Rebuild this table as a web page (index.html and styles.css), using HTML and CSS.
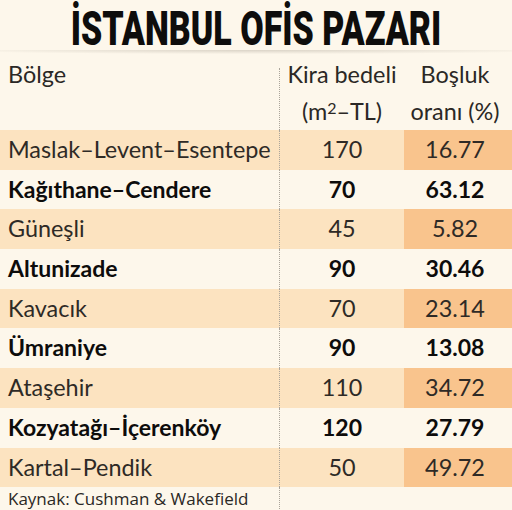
FILE: index.html
```html
<!DOCTYPE html>
<html lang="tr">
<head>
<meta charset="utf-8">
<link rel="stylesheet" href="styles.css">
</head>
<body>
<div class="page">
  <header class="title-wrap">
    <h1 class="title">İSTANBUL OFİS PAZARI</h1>
    <div class="title-shadow"></div>
  </header>
  <div class="table">
    <div class="cell c1 head">Bölge</div>
    <div class="cell c2 head">Kira bedeli<br>(m<sup>2</sup>–TL)</div>
    <div class="cell c3 head">Boşluk<br>oranı (%)</div>

    <div class="cell c1 band">Maslak–Levent–Esentepe</div>
    <div class="cell c2 band">170</div>
    <div class="cell c3 band dark">16.77</div>

    <div class="cell c1 bold">Kağıthane–Cendere</div>
    <div class="cell c2 bold">70</div>
    <div class="cell c3 bold">63.12</div>

    <div class="cell c1 band">Güneşli</div>
    <div class="cell c2 band">45</div>
    <div class="cell c3 band dark">5.82</div>

    <div class="cell c1 bold">Altunizade</div>
    <div class="cell c2 bold">90</div>
    <div class="cell c3 bold">30.46</div>

    <div class="cell c1 band">Kavacık</div>
    <div class="cell c2 band">70</div>
    <div class="cell c3 band dark">23.14</div>

    <div class="cell c1 bold">Ümraniye</div>
    <div class="cell c2 bold">90</div>
    <div class="cell c3 bold">13.08</div>

    <div class="cell c1 band">Ataşehir</div>
    <div class="cell c2 band">110</div>
    <div class="cell c3 band dark">34.72</div>

    <div class="cell c1 bold">Kozyatağı–İçerenköy</div>
    <div class="cell c2 bold">120</div>
    <div class="cell c3 bold">27.79</div>

    <div class="cell c1 band">Kartal–Pendik</div>
    <div class="cell c2 band">50</div>
    <div class="cell c3 band dark">49.72</div>

    <div class="cell c1 source">Kaynak: Cushman &amp; Wakefield</div>
    <div class="cell c2 source"></div>
    <div class="cell c3 source"></div>
  </div>
</div>
</body>
</html>
```
FILE: styles.css
```css
html, body {
  margin: 0;
  padding: 0;
  background: #fdf7eb;
}
.page {
  width: 512px;
  height: 510px;
  overflow: hidden;
  background: #fdf7eb;
  color: #2e2a26;
  font-family: Lato, "Open Sans", sans-serif;
}
.title-wrap {
  position: relative;
  padding-bottom: 16px;
}
.title {
  margin: 0 auto;
  width: 380px;
  text-align: center;
  font-family: Roboto, "Liberation Sans", sans-serif;
  font-weight: 900;
  font-size: 34px;
  line-height: 40px;
  color: #0e0d0c;
  transform: scaleY(1.42);
  transform-origin: 50% 0;
  white-space: nowrap;
}
.title-shadow {
  position: absolute;
  left: 0;
  right: 0;
  top: 50px;
  height: 7px;
  background: radial-gradient(ellipse 62% 60% at 50% 0%, rgba(120, 110, 95, 0.26), rgba(120, 110, 95, 0) 100%);
}
.table {
  display: grid;
  grid-template-columns: 280px 124px 108px;
  grid-template-rows: 74px repeat(9, 39.7px) 24px;
}
.cell {
  font-size: 23.4px;
  font-weight: 400;
  line-height: 39.7px;
  white-space: nowrap;
}
.c1 {
  padding-left: 8px;
  border-right: 1px dotted #aaa49a;
}
.c2 {
  text-align: center;
}
.c3 {
  text-align: center;
  padding-right: 6px;
}
.head {
  line-height: 37px;
  color: #2b2825;
}
.head.c1 {
  position: relative;
  border-right: none;
}
.head.c1::after {
  content: "";
  position: absolute;
  right: 0;
  top: 12px;
  bottom: 0;
  border-right: 1px dotted #aaa49a;
}
.head sup {
  font-size: 16px;
  vertical-align: 6px;
  line-height: 0;
}
.band {
  background: #fce3c0;
}
.band.dark {
  background: #f9c48d;
}
.bold {
  font-weight: 700;
  font-size: 23px;
  color: #0d0c0b;
}
.source {
  font-family: "Open Sans", sans-serif;
  font-size: 17px;
  line-height: 24px;
  font-weight: 400;
  color: #2b2825;
}
```
